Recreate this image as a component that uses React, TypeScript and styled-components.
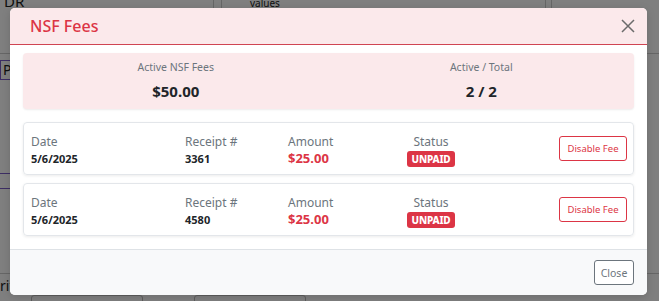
import React from "react";
import styled, { createGlobalStyle } from "styled-components";

const GlobalStyle = createGlobalStyle`
  html, body { margin: 0; padding: 0; }
  body {
    font-family: "Noto Sans", "Open Sans", sans-serif;
    background: #fff;
    width: 659px;
    height: 301px;
    overflow: hidden;
  }
  * { box-sizing: border-box; }
`;

const Page = styled.div`
  position: relative;
  width: 659px;
  height: 301px;
  overflow: hidden;
  background: #fff;
  color: #222;
`;

/* ---------- page behind the modal ---------- */
const BgTop = styled.div`
  height: 54px;
  display: flex;
  border-bottom: 1px solid #ccc;
`;
const BgCell = styled.div<{ $w: number }>`
  width: ${(p) => p.$w}px;
  border-right: 1px solid #ccc;
  font-size: 15px;
  line-height: 16px;
  padding-left: 4px;
  margin-top: -7px;
`;
const BgSmall = styled.span`
  font-size: 10px;
  padding-left: 24px;
`;
const BgPurpleBox = styled.div`
  margin-top: 6px;
  height: 20px;
  width: 140px;
  border: 1px solid #7a5cc8;
  font-size: 14px;
  line-height: 18px;
  padding-left: 2px;
`;
const BgPurpleLines = styled.div`
  margin-top: 93px;
  height: 16px;
  width: 140px;
  border-top: 1px solid #7a5cc8;
  border-bottom: 1px solid #7a5cc8;
`;
const BgRule = styled.div`
  margin-top: 84px;
  border-top: 1px solid #ccc;
  height: 22px;
  font-size: 14px;
  line-height: 24px;
`;
const BgInputs = styled.div`
  display: flex;
  gap: 51px;
  padding-left: 31px;
`;
const BgInput = styled.div`
  width: 112px;
  height: 10px;
  border: 1px solid #bbb;
  border-radius: 3px;
`;

/* ---------- modal ---------- */
const Overlay = styled.div`
  position: absolute;
  inset: 0;
  background: rgba(0, 0, 0, 0.5);
  display: flex;
  align-items: flex-start;
  padding: 8px 12px 0 10px;
`;

const Modal = styled.div`
  width: 637px;
  height: 287px;
  background: #fff;
  border-radius: 5px;
  display: flex;
  flex-direction: column;
  overflow: hidden;
  box-shadow: 0 2px 8px rgba(0, 0, 0, 0.15);
`;

const Header = styled.div`
  height: 37px;
  flex: none;
  background: #fbe9eb;
  border-bottom: 1px solid #d04452;
  display: flex;
  align-items: center;
  justify-content: space-between;
  padding: 0 12px 0 20px;
`;

const Title = styled.h5`
  margin: 0;
  color: #dc3545;
  font-size: 16px;
  font-weight: 500;
  line-height: 20px;
`;

const CloseX = styled.button`
  border: 0;
  background: transparent;
  padding: 0;
  width: 14px;
  height: 14px;
  display: flex;
  cursor: pointer;
  margin-top: -1px;
`;

const Body = styled.div`
  flex: 1;
  padding: 8px 13px 0;
`;

const Summary = styled.div`
  height: 56px;
  display: grid;
  grid-template-columns: 1fr 1fr;
  background: #fbe9eb;
  border-radius: 4px;
  box-shadow: 0 1px 2px rgba(0, 0, 0, 0.08);
  margin-bottom: 13px;
  text-align: center;
  padding-top: 7px;
`;

const StatLabel = styled.div`
  font-size: 10.5px;
  line-height: 14px;
  color: #6c757d;
`;

const StatValue = styled.div`
  font-size: 15px;
  line-height: 20px;
  font-weight: 700;
  color: #212529;
  margin-top: 7px;
`;

const List = styled.div`
  display: flex;
  flex-direction: column;
  gap: 8px;
`;

const Card = styled.div`
  height: 53px;
  border: 1px solid #e3e6ea;
  border-radius: 4px;
  box-shadow: 0 1px 3px rgba(0, 0, 0, 0.08);
  padding: 0 6px 0 7px;
  display: grid;
  grid-template-columns: 154px 103px 100px 86px 1fr;
  align-items: center;
`;

const Field = styled.div<{ $center?: boolean }>`
  display: flex;
  flex-direction: column;
  align-items: ${(p) => (p.$center ? "center" : "flex-start")};
  padding-top: 4px;
`;

const Label = styled.div`
  font-size: 12px;
  line-height: 16px;
  color: #6c757d;
`;

const Value = styled.div<{ $red?: boolean }>`
  font-size: ${(p) => (p.$red ? "13px" : "11px")};
  line-height: 17px;
  font-weight: 700;
  color: ${(p) => (p.$red ? "#dc3545" : "#212529")};
`;

const Badge = styled.span`
  margin-top: 1px;
  width: 48px;
  text-align: center;
  background: #dc3545;
  color: #fff;
  font-size: 10px;
  font-weight: 800;
  line-height: 16px;
  height: 16px;
  border-radius: 3px;
  letter-spacing: -0.2px;
`;

const Actions = styled.div`
  display: flex;
  justify-content: flex-end;
`;

const OutlineButton = styled.button<{ $tone: "danger" | "muted" }>`
  height: 25px;
  width: ${(p) => (p.$tone === "danger" ? "68px" : "40px")};
  padding: 0;
  border-radius: 3px;
  background: #fff;
  font-family: inherit;
  font-size: ${(p) => (p.$tone === "danger" ? "9.5px" : "10.5px")};
  color: ${(p) => (p.$tone === "danger" ? "#dc3545" : "#6c757d")};
  border: 1px solid ${(p) => (p.$tone === "danger" ? "#dc3545" : "#6c757d")};
  cursor: pointer;
`;

const Footer = styled.div`
  height: 46px;
  flex: none;
  background: #f8f9fa;
  border-top: 1px solid #dee2e6;
  display: flex;
  align-items: center;
  justify-content: flex-end;
  padding: 0 13px 0 0;
`;

const fees = [
  { date: "5/6/2025", receipt: "3361", amount: "$25.00" },
  { date: "5/6/2025", receipt: "4580", amount: "$25.00" },
];

export default function App() {
  return (
    <Page>
      <GlobalStyle />
      <BgTop>
        <BgCell $w={214}>DR</BgCell>
        <BgCell $w={8} />
        <BgCell $w={324}>
          <BgSmall>values</BgSmall>
        </BgCell>
        <BgCell $w={6} />
      </BgTop>
      <BgPurpleBox>Pa</BgPurpleBox>
      <BgPurpleLines />
      <BgRule>rit</BgRule>
      <BgInputs>
        <BgInput />
        <BgInput />
      </BgInputs>

      <Overlay>
        <Modal>
          <Header>
            <Title>NSF Fees</Title>
            <CloseX aria-label="Close">
              <svg width="14" height="14" viewBox="0 0 14 14">
                <path d="M1 1 L13 13 M13 1 L1 13" stroke="#6b6b6b" strokeWidth="1.5" fill="none" />
              </svg>
            </CloseX>
          </Header>
          <Body>
            <Summary>
              <div>
                <StatLabel>Active NSF Fees</StatLabel>
                <StatValue>$50.00</StatValue>
              </div>
              <div>
                <StatLabel>Active / Total</StatLabel>
                <StatValue>2 / 2</StatValue>
              </div>
            </Summary>
            <List>
              {fees.map((f) => (
                <Card key={f.receipt}>
                  <Field>
                    <Label>Date</Label>
                    <Value>{f.date}</Value>
                  </Field>
                  <Field>
                    <Label>Receipt #</Label>
                    <Value>{f.receipt}</Value>
                  </Field>
                  <Field>
                    <Label>Amount</Label>
                    <Value $red>{f.amount}</Value>
                  </Field>
                  <Field $center>
                    <Label>Status</Label>
                    <Badge>UNPAID</Badge>
                  </Field>
                  <Actions>
                    <OutlineButton $tone="danger">Disable Fee</OutlineButton>
                  </Actions>
                </Card>
              ))}
            </List>
          </Body>
          <Footer>
            <OutlineButton $tone="muted">Close</OutlineButton>
          </Footer>
        </Modal>
      </Overlay>
    </Page>
  );
}
